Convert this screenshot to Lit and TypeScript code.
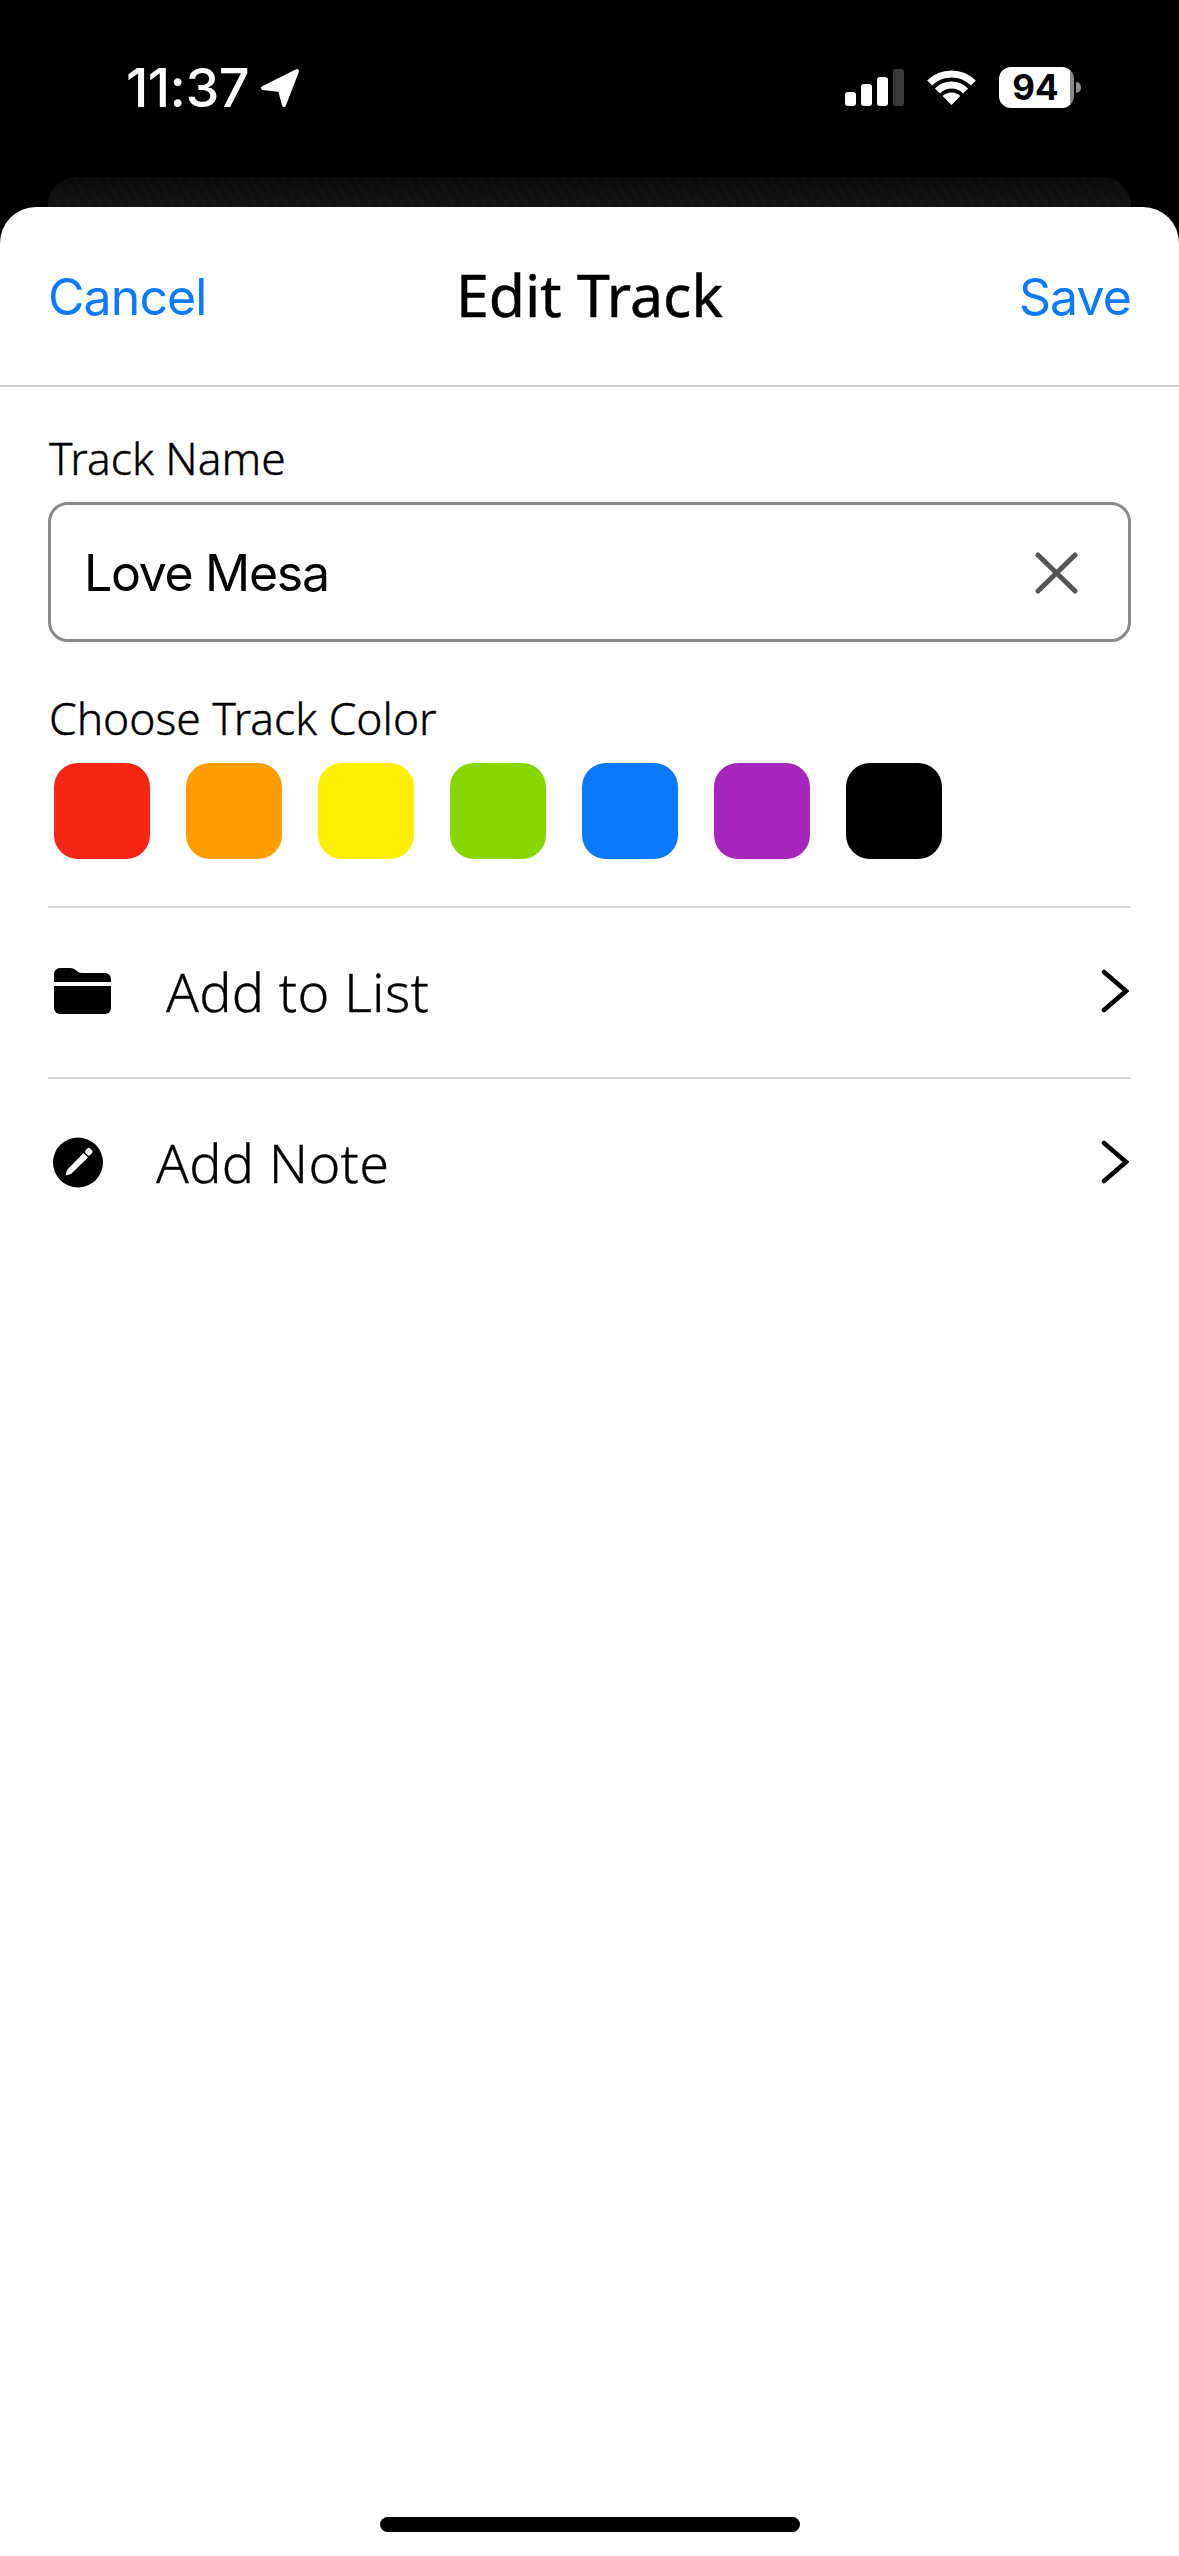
import {LitElement, css, html, svg} from 'lit'
import {customElement} from 'lit/decorators.js'

const COLORS = ['#f72514', '#ff9d00', '#fff000', '#88d600', '#0a78ff', '#a626bb', '#000000']

const chevron = html`<svg class="chevron" viewBox="0 0 28 44"><path d="M3 3 L25 22 L3 41"/></svg>`

const folder = svg`<path d="M0 6 a6 6 0 0 1 6-6 h10 c6 0 7 5 12 5 h23 a6 6 0 0 1 6 6 v3 H0 Z"/><path d="M0 18 H57 V40 a6 6 0 0 1-6 6 H6 a6 6 0 0 1-6-6 Z"/>`

const pencil = svg`<circle cx="26" cy="26.5" r="25"/><path d="M13.5 39.5 L15 34 L31.5 17 L36 21.5 L19 38 Z" fill="#fff"/><rect x="33.5" y="12.5" width="6.5" height="6.5" rx="2" transform="rotate(45 36.75 15.75)" fill="#fff"/>`

@customElement('app-root')
export class App_Root extends LitElement
{
    render()
    {
        return html`
            <div class="status">
                <div class="clock">
                    <span>11:37</span>
                    <svg class="arrow" viewBox="0 0 40 40"><path d="M37 3 L3 20 L20 22 L24 37 Z"/></svg>
                </div>
                <div class="indicators">
                    <div class="signal">
                        <i style="height:14px"></i><i style="height:22px"></i><i style="height:29px"></i><i class="off" style="height:37px"></i>
                    </div>
                    <svg class="wifi" viewBox="0 0 49 37">
                        <path class="arc" d="M2.6 14.1 A31 31 0 0 1 46.4 14.1"/>
                        <path class="arc" d="M10.4 21.9 A20 20 0 0 1 38.6 21.9"/>
                        <path d="M15.6 27.1 A12.5 12.5 0 0 1 33.4 27.1 L24.5 36 Z"/>
                    </svg>
                    <div class="battery">
                        <div class="level">94</div>
                        <div class="nub"></div>
                    </div>
                </div>
            </div>
            <div class="peek"></div>
            <div class="sheet">
                <header>
                    <span class="link">Cancel</span>
                    <h1>Edit Track</h1>
                    <span class="link save">Save</span>
                </header>
                <div class="body">
                    <div class="label name-label">Track Name</div>
                    <div class="field">
                        <span>Love Mesa</span>
                        <svg class="clear" viewBox="0 0 43 42"><path d="M3 3 L40 39 M40 3 L3 39"/></svg>
                    </div>
                    <div class="label color-label">Choose Track Color</div>
                    <div class="swatches">
                        ${COLORS.map(c => html`<div class="swatch" style="background:${c}"></div>`)}
                    </div>
                    <div class="row first">
                        <svg class="folder" viewBox="0 0 57 46">${folder}</svg>
                        <span class="list-text">Add to List</span>
                        ${chevron}
                    </div>
                    <div class="row">
                        <svg class="note" viewBox="0 0 53 53">${pencil}</svg>
                        <span class="note-text">Add Note</span>
                        ${chevron}
                    </div>
                </div>
                <div class="home"></div>
            </div>
        `
    }

    static styles = css`
        :host
        {
            display: flex;
            flex-direction: column;
            height: 2556px;
            background: #000;
            font-family: "Noto Sans", sans-serif;
            color: #000;
        }

        .status
        {
            height: 177px;
            box-sizing: border-box;
            padding: 67px 98px 0 126px;
            display: flex;
            justify-content: space-between;
            align-items: flex-start;
            color: #fff;
        }

        .clock
        {
            display: flex;
            align-items: center;
            gap: 11px;
            height: 41px;
            font: 500 54px/41px Inter, sans-serif;
            letter-spacing: -0.6px;
        }

        .arrow
        {
            width: 40px;
            height: 40px;
            fill: #fff;
            stroke: #fff;
            stroke-width: 4;
            stroke-linejoin: round;
        }

        .indicators
        {
            display: flex;
            align-items: center;
            height: 41px;
        }

        .signal
        {
            display: flex;
            align-items: flex-end;
            gap: 5px;
            height: 37px;
            margin-right: 23px;
        }

        .signal i
        {
            width: 11px;
            border-radius: 3px;
            background: #fff;
        }

        .signal i.off
        {
            background: #3a3a3a;
        }

        .wifi
        {
            width: 49px;
            height: 37px;
            margin-right: 23px;
            fill: #fff;
        }

        .wifi .arc
        {
            fill: none;
            stroke: #fff;
            stroke-width: 7;
        }

        .battery
        {
            display: flex;
            align-items: center;
        }

        .level
        {
            width: 75px;
            height: 41px;
            box-sizing: border-box;
            border-radius: 12px;
            background: linear-gradient(90deg, #fff 71px, #8a8a8a 71px);
            color: #000;
            font: 700 35px/41px Inter, sans-serif;
            text-align: center;
            padding-right: 2px;
        }

        .nub
        {
            width: 5px;
            height: 11px;
            margin-left: 2px;
            border-radius: 0 6px 6px 0;
            background: #8a8a8a;
        }

        .peek
        {
            height: 30px;
            margin: 0 48px;
            border-radius: 28px 28px 0 0;
            background:
                repeating-linear-gradient(60deg, rgba(255, 255, 255, 0.012) 0 3px, transparent 3px 9px),
                linear-gradient(#090a09, #121412);
        }

        .sheet
        {
            flex: 1;
            display: flex;
            flex-direction: column;
            background: #fff;
            border-radius: 36px 36px 0 0;
        }

        header
        {
            height: 180px;
            box-sizing: border-box;
            padding: 0 48px;
            display: grid;
            grid-template-columns: 1fr auto 1fr;
            align-items: center;
            border-bottom: 2px solid #cfcfcf;
        }

        h1
        {
            margin: 0 0 3px;
            font: 400 59px/1 "Noto Sans", sans-serif;
            -webkit-text-stroke: 0.5px #000;
        }

        .link
        {
            padding-top: 2px;
            font: 400 50px/1 Inter, sans-serif;
            letter-spacing: -0.9px;
            color: #0a7aff;
        }

        .save
        {
            text-align: right;
        }

        .body
        {
            padding: 0 48px;
        }

        .label
        {
            font-size: 44.4px;
            font-weight: 300;
            line-height: 52px;
            padding-left: 1px;
            -webkit-text-stroke: 0.4px #000;
        }

        .name-label
        {
            margin-top: 45px;
        }

        .field
        {
            box-sizing: border-box;
            height: 140px;
            margin-top: 18px;
            padding: 2px 50px 0 33px;
            display: flex;
            align-items: center;
            justify-content: space-between;
            border: 3px solid #8a8a8a;
            border-radius: 20px;
            font: 400 50px/1 Inter, sans-serif;
            letter-spacing: -1.3px;
        }

        .clear
        {
            width: 43px;
            height: 42px;
            fill: none;
            stroke: #555;
            stroke-width: 5;
            stroke-linecap: round;
        }

        .color-label
        {
            margin-top: 50px;
        }

        .swatches
        {
            display: flex;
            gap: 36px;
            margin: 19px 0 0 6px;
        }

        .swatch
        {
            width: 96px;
            height: 96px;
            border-radius: 24px;
        }

        .row
        {
            display: flex;
            align-items: center;
            height: 169px;
            border-top: 2px solid #d8d8d8;
            font-size: 54px;
            font-weight: 300;
            letter-spacing: 0.3px;
            -webkit-text-stroke: 0.3px #000;
        }

        .row.first
        {
            margin-top: 47px;
        }

        .list-text
        {
            margin: -4px 0 0 55px;
        }

        .note-text
        {
            margin: -4px 0 0 51px;
        }

        .folder
        {
            width: 57px;
            height: 46px;
            margin-left: 6px;
            margin-top: -3px;
        }

        .note
        {
            width: 53px;
            height: 53px;
            margin-left: 4px;
            margin-top: -3px;
        }

        .chevron
        {
            width: 28px;
            height: 44px;
            margin: -3px 2px 0 auto;
            fill: none;
            stroke: #000;
            stroke-width: 4.5;
            stroke-linecap: round;
            stroke-linejoin: miter;
        }

        .home
        {
            width: 420px;
            height: 15px;
            margin: auto auto 24px;
            border-radius: 8px;
            background: #000;
        }
    `
}

declare global
{
    interface HTMLElementTagNameMap
    {
        'app-root': App_Root
    }
}
